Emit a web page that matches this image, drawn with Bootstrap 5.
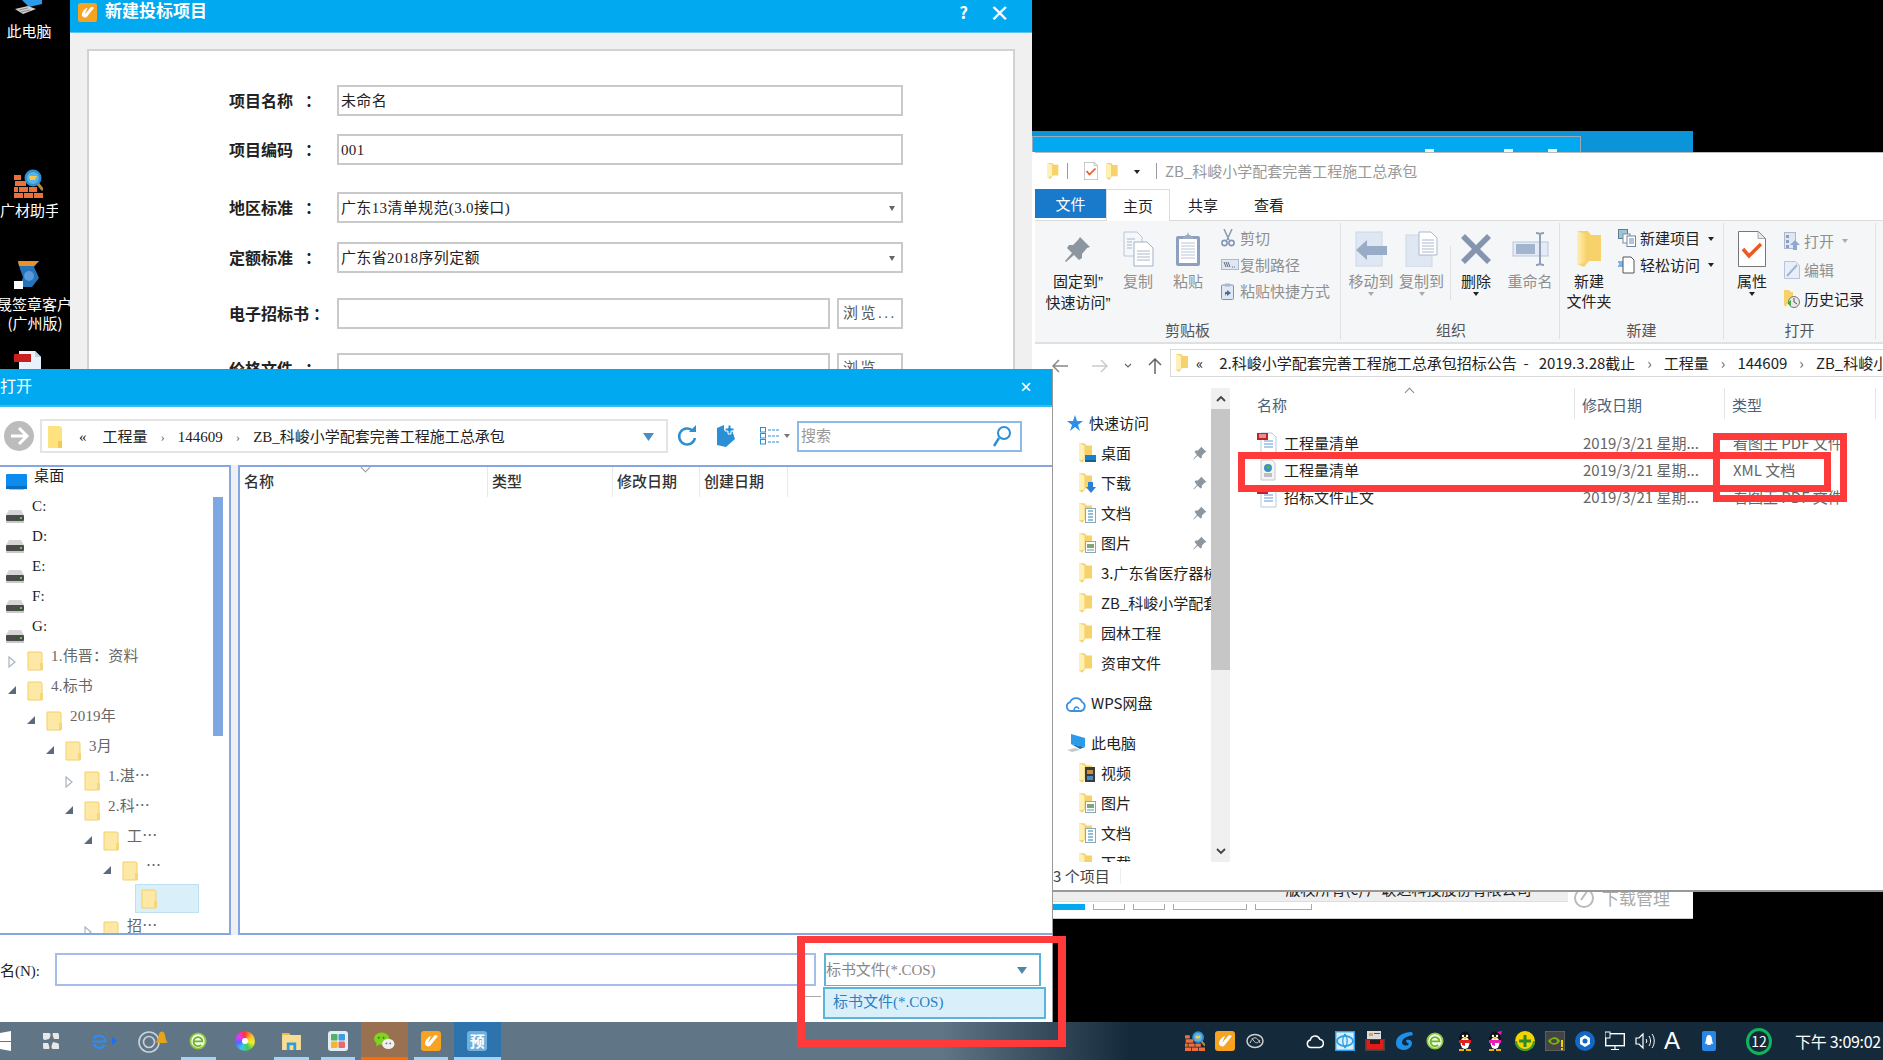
<!DOCTYPE html>
<html lang="zh-CN">
<head>
    <meta charset="UTF-8">
    <title>新建投标项目</title>
    <link href="https://cdn.jsdelivr.net/npm/bootstrap@5.3.3/dist/css/bootstrap.min.css" rel="stylesheet">
    <style>
        html, body { height: 100%; }
        body { background: #000; overflow: hidden; font-family: "Noto Sans CJK SC", "Liberation Sans", sans-serif; font-size: 15px; line-height: 20px; color: #222; }
        .sim { font-family: "Liberation Serif", "Noto Sans CJK SC", serif; }
        svg { display: block; flex: none; }

        /* desktop */
        .dsk { position: absolute; left: 0; width: 70px; color: #fff; text-align: center; white-space: nowrap; overflow: hidden; }
        .dsk svg { margin: 0 auto 2px 14px; }
        .dsk-a { top: 0; height: 40px; width: 58px; }
        .dsk-b { top: 169px; height: 54px; width: 58px; }
        .dsk-c { top: 261px; height: 74px; }
        .dsk-d { top: 351px; height: 18px; }
        .dsk-a svg { margin-bottom: 6px; }
        .dsk-b svg { margin-bottom: 2px; }
        .dsk-c svg { margin-bottom: 5px; }
        .dsk-c p { margin: 0 0 -1px -3px; width: 74px; }

        /* bid dialog */
        .bid { position: absolute; left: 70px; top: 0; width: 962px; height: 369px; background: #f0f0f0; z-index: 2; }
        .bid-title { height: 33px; background: #00a9f0; color: #fff; font-weight: 700; font-size: 17px; padding: 0 22px 8px 8px; border-bottom: 1px solid #5cc4ef; }
        .bid-q { margin-right: 21px; }
        .bid-close { font-size: 21px; }
        .bid-panel { margin: 16px 17px 0 17px; height: 330px; background: #fff; border: 2px solid #d2d2d2; padding: 34px 0 0 140px; overflow: hidden; }
        .frm-row { height: 31px; }
        .g18 { margin-bottom: 18px; } .g27 { margin-bottom: 27px; } .g19 { margin-bottom: 19px; } .g25 { margin-bottom: 25px; } .g24 { margin-bottom: 24px; }
        .frm-lab { width: 108px; font-weight: 700; font-size: 16px; color: #222; white-space: pre; padding-top: 3px; }
        .fld { width: 566px; height: 31px; border: 2px solid #c9c9c9; border-radius: 0; padding: 1px 2px 0; font-size: 15px; line-height: 27px; color: #222; letter-spacing: .35px; }
        .fld-s { width: 493px; margin-right: 7px; }
        .brw { width: 66px; height: 31px; border: 2px solid #c9c9c9; border-radius: 0; padding: 0; background: #fff; font-size: 15px; color: #555; letter-spacing: 2.500px; }
        .cart { width: 0; height: 0; border-left: 3px solid transparent; border-right: 3px solid transparent; border-top: 5px solid #666; margin-right: 4px; }

        /* window behind explorer */
        .back { position: absolute; left: 1032px; top: 131px; width: 661px; height: 788px; background: #fff; border-bottom: 1px solid #ccc; z-index: 1; }
        .back-top { height: 21px; background: #0b95d8; padding-top: 5px; }
        .back-top div { width: 549px; height: 16px; background: #00a9f0; border: 1px solid #9ab; border-bottom: 0; padding-left: 392px; }
        .back-top i { width: 9px; height: 3px; background: #e8f6fd; }
        .bt-b { margin-left: 70px; } .bt-c { margin-left: 35px; }
        .back-foot { height: 38px; }
        .back-strip { height: 22px; background: #eee; margin-left: 21px; margin-right: 125px; padding-left: 196px; text-align: center; line-height: 18px; color: #222; border-bottom: 1px solid #ddd; white-space: nowrap; }
        .back-tabs { padding: 2px 0 0 21px; }
        .back-tabs span { height: 6px; border: 1px solid #aaa; border-top: 0; background: #fff; }
        .back-tabs .on { background: #00a9f0; border: 0; width: 32px; }
        .wa { width: 32px; } .wb { width: 74px; } .wc { width: 57px; }
        .dl-mgr { position: absolute; left: 542px; bottom: 8px; color: #aaa; font-size: 17px; line-height: 24px; white-space: nowrap; }

        /* explorer */
        .expl { position: absolute; left: 1035px; top: 152px; width: 848px; height: 740px; background: #fff; border-top: 1px solid #bbb; border-bottom: 2px solid #999; z-index: 2; }
        .ex-title { height: 36px; padding-left: 12px; color: #999; }
        .ex-bar { width: 1px; height: 16px; background: #999; }
        .ex-tabs { height: 32px; border-bottom: 1px solid #dadbdc; }
        .ex-tab { height: 32px; text-align: center; line-height: 32px; }
        .tab-file { width: 71px; height: 29px; line-height: 29px; background: #1979ca; color: #fff; }
        .tab-home { width: 64px; background: #fff; border: 1px solid #dadbdc; border-bottom: 0; height: 32px; margin-bottom: -1px; position: relative; }
        .tab-other { width: 66px; }
        .ribbon { height: 123px; background: #f5f6f7; border-bottom: 2px solid #dfe0e1; }
        .rb-grp { border-right: 1px solid #dfe0e1; margin: 2px 0 3px; }
        .grp-1 { width: 306px; } .grp-2 { width: 219px; padding-left: 2px; } .grp-3 { width: 164px; } .grp-4 { width: 152px; }
        .rb-body { height: 96px; padding-top: 5px; }
        .rb-lab { text-align: center; color: #555; line-height: 22px; }
        .rb-big { text-align: center; color: #222; line-height: 20px; position: relative; white-space: nowrap; }
        .rb-ic { height: 42px; display: flex; align-items: center; justify-content: center; margin-bottom: 1px; }
        .rb-off { color: #8f8f8f; }
        .qt { font-family: "Liberation Sans", sans-serif; }
        .drop { width: 0; height: 0; border-left: 3px solid transparent; border-right: 3px solid transparent; border-top: 4px solid #222; margin: 1px auto 0; }
        .drop-g { border-top-color: #aaa; }
        .w86 { width: 86px; } .w34 { width: 34px; } .w66 { width: 66px; } .w56 { width: 56px; } .w45 { width: 45px; } .w52 { width: 52px; } .w58 { width: 58px; }
        .vsep { border-left: 1px solid #dfe0e1; height: 54px; margin-top: 18px; margin-left: 6px; margin-right: -1px; }
        .rb-small { margin-top: -3px; }
        .rb-line { height: 26.500px; white-space: nowrap; }
        .rb-open { margin-top: -2px; }
        .rb-open .rb-line { height: 29px; }
        .lab-off { color: #8f8f8f; }
        .ic-19 { width: 19px; } .ic-22 { width: 22px; }
        .ex-addr { height: 44px; padding-left: 17px; }
        .addr-box { width: 713px; height: 28px; margin-left: 8px; border: 1px solid #d9d9d9; border-right: 0; padding-left: 5px; white-space: pre; overflow: hidden; color: #222; margin-top: -7px; }
        .chev { color: #666; padding: 0 12px; }
        .ex-body { height: 474px; }
        .side { width: 176px; overflow: hidden; padding-top: 20px; }
        .side-row { height: 30px; width: 176px; white-space: nowrap; overflow: hidden; }
        .side-par { padding-left: 31px; gap: 5px; }
        .side-kid { padding-left: 44px; gap: 5px; }
        .side-gap { margin-top: 10px; }
        .side-pin { margin-left: auto; margin-right: 4px; }
        .sb { width: 19px; background: #f0f0f0; color: #444; }
        .sb-thumb { height: 261px; background: #c6c6c6; margin-top: 0; }
        .sb-btn { height: 21px; display: flex; align-items: center; justify-content: center; }
        .sb-sp { flex: 1; }
        .flist { flex: 1; padding-left: 3px; position: relative; }
        .fl-head { height: 31px; color: #4c607a; }
        .fl-head div { height: 31px; line-height: 33px; border-right: 1px solid #e5e5e5; padding-left: 7px; }
        .col-n { width: 342px; padding-left: 24px !important; }
        .col-d { width: 150px; }
        .col-t { width: 151px; }
        .sort-up { position: absolute; left: 176px; top: 1px; width: 7px; height: 7px; border-left: 1px solid #888; border-top: 1px solid #888; transform: rotate(45deg); }
        .fl-rows { padding-top: 10px; }
        .fl-row { height: 27px; line-height: 27px; color: #666; white-space: nowrap; }
        .fl-name { width: 342px; padding-left: 24px; gap: 7px; color: #222; }
        .fl-row .col-d, .fl-row .col-t { padding-left: 8px; overflow: hidden; }
        .ex-stat { height: 28px; padding-left: 18px; line-height: 28px; color: #444; }
        .stat-sep { width: 1px; height: 16px; background: #eee; margin-left: 10px; }

        /* open dialog */
        .opn { position: absolute; left: 0; top: 369px; width: 1053px; height: 653px; background: #fff; border-right: 1px solid #999; z-index: 3; }
        .opn-title { height: 38px; background: #00a9f0; color: #fff; font-size: 16px; padding-right: 20px; border-bottom: 2px solid #38b9ef; }
        .opn-close { font-size: 21px; font-weight: 700; }
        .opn-tool { height: 58px; padding-left: 4px; }
        .opn-addr { width: 628px; height: 34px; margin-left: 6px; border: 2px solid #e4e4e4; padding: 1px 12px 0 5px; color: #222; white-space: nowrap; }
        .opn-addr .chev { padding: 0 13px; font-size: 13px; }
        .opn-srch { width: 225px; height: 31px; border: 2px solid #8dbbe9; border-radius: 0; padding: 0 8px 0 2px; color: #999; }
        .t-ref { margin-left: 9px; } .t-fld { margin-left: 18px; } .t-lst { margin-left: 25px; }
        .t-srch { margin-left: 7px; }
        .opn-mid { height: 470px; background: #eef0f2; gap: 7px; }
        .tree { width: 231px; border: 2px solid #85a6e2; border-left: 0; background: #fff; overflow: hidden; position: relative; }
        .t-row { height: 30px; line-height: 24px; color: #666; white-space: nowrap; letter-spacing: .2px; }
        .t-top { color: #222; padding-left: 6px; }
        .t-first { height: 27px; line-height: 18px; }
        .t-top svg { margin-top: 16px; margin-right: 8px; }
        .t-first.t-top svg { margin-top: 7px; margin-right: 7px; }
        .t-arr { width: 19px; padding-top: 12px; }
        .t-row .t-f { margin-top: 7px; margin-right: 7px; }
        .l0 { padding-left: 8px; } .l1 { padding-left: 27px; } .l2 { padding-left: 46px; } .l3 { padding-left: 65px; } .l4 { padding-left: 84px; } .l5 { padding-left: 103px; }
        .t-sel { margin-left: 135px; width: 64px; height: 29px; padding: 4px 0 0 5px; background: #d9f0fb; border: 1px solid #bfe0f0; margin-bottom: 1px; }
        .t-scr { position: absolute; left: 213px; top: 30px; width: 10px; height: 239px; background: #7fa8e2; }
        .lst { flex: 1; border: 2px solid #85a6e2; border-right: 0; background: #fff; position: relative; }
        .lst-head { height: 30px; font-weight: 500; color: #333; }
        .lst-head div { height: 30px; line-height: 30px; border-right: 1px solid #e9e9e9; padding-left: 4px; }
        .lh-a { width: 248px; } .lh-b { width: 125px; } .lh-c { width: 87px; } .lh-d { width: 88px; }
        .sort-dn { position: absolute; left: 122px; top: -3px; width: 7px; height: 7px; border-right: 1px solid #999; border-bottom: 1px solid #999; transform: rotate(45deg); }
        .opn-bot { height: 87px; padding-top: 18px; }
        .nm-lab { width: 55px; }
        .nm-inp { width: 761px; height: 33px; border: 2px solid #a7bde9; border-radius: 0; }
        .cb-dash { position: absolute; left: 803px; top: 627px; width: 18px; height: 1px; background: #aaa; }
        .cb { width: 217px; height: 33px; margin-left: 8px; border: 2px solid #5ab4dc; border-bottom-width: 1px; padding: 0 12px 0 0; color: #888; letter-spacing: -.1px; }
        .cb-car { width: 0; height: 0; border-left: 5px solid transparent; border-right: 5px solid transparent; border-top: 7px solid #4f87a8; }
        .cb-list { position: absolute; left: 823px; top: 618px; width: 223px; height: 32px; background: #d9f0fb; border: 2px solid #5ab4dc; padding: 0 0 0 8px; line-height: 27px; color: #2a7fbf; z-index: 1; }

        /* taskbar */
        .tbar { position: absolute; left: 0; right: 0; bottom: 0; height: 38px; background: linear-gradient(90deg, #607585 0, #607585 50%, #14293a 60%); z-index: 4; }
        .tb-c { width: 46.500px; height: 38px; display: flex; align-items: center; justify-content: center; position: relative; }
        .tb-win { width: 28px; justify-content: flex-start; margin-left: -9px; margin-right: 9px; }
        .tb-s { width: 46px; } .tb-ie { width: 54px; gap: 3px; padding-left: 4px; } .tb-sw { width: 47px; }
        .ul::after { content: ""; position: absolute; left: 6px; right: 6px; bottom: 0; height: 3px; background: #a3d3f5; }
        .ul-wx { background: #9a7150; }
        .ul-wx::after { left: 0; right: 0; background: #ff6a00; }
        .ul-yu { background: #2d74ae; }
        .ul-yu::after { left: 0; right: 0; }
        .yu-ic { width: 20px; height: 20px; border-radius: 3px; background: #6fb0dc; color: #fff; font-size: 15px; line-height: 20px; text-align: center; font-weight: 700; }
        .swirl { width: 20px; height: 20px; border-radius: 50%; background: conic-gradient(#f33, #fb2, #ee3, #4c4, #3ce, #56f, #e3e, #f33); position: relative; }
        .swirl::after { content: ""; position: absolute; left: 7px; top: 7px; width: 6px; height: 6px; border-radius: 50%; background: #fff; }
        .tray { margin-left: auto; padding-right: 2px; }
        .tr-c { width: 30px; height: 38px; display: flex; align-items: center; justify-content: center; }
        .tr-gap { width: 30px; }
        .tr-a { width: 24px; color: #fff; font-family: "Liberation Sans", sans-serif; font-size: 24px; text-align: center; margin-right: 10px; }
        .tr-n { width: 26px; height: 27px; border: 3px solid #10b45c; border-radius: 50%; color: #fff; font-size: 14px; line-height: 21px; text-align: center; margin: 0 23px 0 22px; }
        .clock { color: #fff; font-size: 16px; white-space: nowrap; width: 86px; letter-spacing: -.3px; }

        /* red marks */
        .mk { position: absolute; border: 7px solid #ff3a3a; z-index: 5; }
        .mk-a { left: 1238px; top: 452px; width: 593px; height: 40px; }
        .mk-b { left: 1713px; top: 433px; width: 134px; height: 69px; }
        .mk-c { left: 797px; top: 936px; width: 269px; height: 111px; border-width: 7px 8px; }
    </style>
</head>
<body>

<svg width="0" height="0" class="position-absolute">
    <defs>
        <linearGradient id="yl" x1="0" x2="1" y1="0" y2="0"><stop offset="0" stop-color="#fff0b5"/><stop offset="1" stop-color="#f7cf62"/></linearGradient>
        <symbol id="fd" viewBox="0 0 17 20"><path d="M1 1h13l1 1v17H1z" fill="#fde9a5" stroke="#f4cf68"/><path d="M13 12h3v7h-3z" fill="#f7d677"/></symbol>
        <symbol id="fx" viewBox="0 0 12 18"><path d="M0 0h5l2 2h5v12H6l-3 4-3-2z" fill="#f7d16a"/><path d="M0 0l5 2v13l-5 1z" fill="#fff0b5"/></symbol>
        <symbol id="drv" viewBox="0 0 18 13"><path d="M3 0h12l3 5H0z" fill="#d6d6d6"/><rect y="5" width="18" height="6" rx="1" fill="#4b4b4b"/><rect x="14" y="7" width="2" height="2" fill="#4cd14c"/><rect y="11" width="18" height="2" fill="#c9c9c9"/></symbol>
        <symbol id="mon" viewBox="0 0 21 16"><rect width="21" height="13" rx="1" fill="#0d8cf0"/><rect y="12" width="21" height="3" fill="#0a6fc2"/><rect x="3" y="15" width="15" height="1" fill="#9cc"/></symbol>
        <symbol id="tro" viewBox="0 0 8 12"><path d="M1 1l6 5-6 5z" fill="#fff" stroke="#a9b4bd" stroke-width="1.2"/></symbol>
        <symbol id="trf" viewBox="0 0 8 8"><path d="M0 8L8 0v8z" fill="#5b6b7d"/></symbol>
        <symbol id="pin" viewBox="0 0 26 26"><path d="M15 1l10 10-3 1-5 6v4l-3 2-5-5-8 7-1-1 7-8-5-5 2-3h4l5-5z" fill="#8b969f"/></symbol>
        <symbol id="doc" viewBox="0 0 31 36"><path d="M1 1h13l5 5v19H1z" fill="#f4f7fb" stroke="#b9c6d8"/><path d="M11 11h13l6 6v18H11z" fill="#fff" stroke="#9fb0c8"/><path d="M14 20h13M14 23h13M14 26h13M14 29h13M4 8h8M4 11h5M4 14h5M4 17h5" stroke="#a9b8cc"/></symbol>
        <symbol id="clip" viewBox="0 0 26 36"><rect x="1" y="5" width="24" height="30" rx="2" fill="#8ea0bd"/><rect x="4" y="8" width="18" height="24" fill="#fff"/><path d="M6 12h14M6 15h14M6 18h14M6 21h14M6 24h14M6 27h14" stroke="#b9c6d8"/><path d="M8 6l3-2h1l1-3 1 3h1l3 2v2H8z" fill="#9cabc3"/></symbol>
        <symbol id="sci" viewBox="0 0 14 18"><path d="M3 0l5 11M11 0L6 11" stroke="#8f9db3" stroke-width="1.6" fill="none"/><circle cx="3.5" cy="14" r="2.6" fill="none" stroke="#8497b8" stroke-width="1.6"/><circle cx="10.5" cy="14" r="2.6" fill="none" stroke="#8497b8" stroke-width="1.6"/></symbol>
        <symbol id="cpp" viewBox="0 0 18 11"><rect x=".5" y=".5" width="17" height="10" fill="#dfe7f3" stroke="#a9b9d0"/><path d="M3 3l2 5M5 3l2 5M7 3l2 5M11 8h1M13 8h1" stroke="#667"/></symbol>
        <symbol id="shc" viewBox="0 0 13 17"><rect x=".5" y="2" width="12" height="14.5" rx="1" fill="#dfe7f3" stroke="#7f93b0"/><path d="M4 .5h5v3H4z" fill="#aab8cf"/><path d="M4 13V9h2V7l4 3-4 3v-2H5z" fill="#4c6c9a"/></symbol>
        <symbol id="mov" viewBox="0 0 33 36"><rect x="1" y="1" width="26" height="34" fill="#dfe7f3" stroke="#ccd7e8"/><path d="M12 28L1 18l11-10v6h20v9H12z" fill="#98acc8" transform="translate(0 1)"/></symbol>
        <symbol id="cpt" viewBox="0 0 33 36"><rect x="1" y="4" width="26" height="32" fill="#dfe7f3" stroke="#ccd7e8"/><path d="M14 1h12l6 6v17H14z" fill="#fff" stroke="#a9b9d0"/><path d="M17 9h12M17 12h12M17 15h12M17 18h12M17 21h12" stroke="#a9b8cc"/></symbol>
        <symbol id="del" viewBox="0 0 32 32"><path d="M5 1l11 11L27 1l4 4-11 11 11 11-4 4-11-11L5 31l-4-4 11-11L1 5z" fill="#8595b0"/></symbol>
        <symbol id="ren" viewBox="0 0 37 34"><rect x="1" y="10" width="35" height="14" fill="#e4ebf6" stroke="#b6c5dc"/><rect x="4" y="12" width="19" height="10" fill="#a3b4cf"/><path d="M24 1c3 0 4 1 4 2v28c0 1-1 2-4 2M32 1c-3 0-4 1-4 2v28c0 1 1 2 4 2" fill="none" stroke="#8ea0bd" stroke-width="2"/></symbol>
        <symbol id="nwf" viewBox="0 0 24 36"><path d="M0 0h11l3 4h10v26H12l-5 6-7-3z" fill="#f7d16a"/><path d="M0 0l11 4v27L0 34z" fill="url(#yl)"/></symbol>
        <symbol id="nwi" viewBox="0 0 18 18"><rect x=".5" y=".5" width="9" height="9" fill="#9cc5d8" stroke="#5a7f95"/><rect x="5" y="5" width="7" height="9" fill="#fff" stroke="#889"/><rect x="9" y="7" width="8.5" height="10.5" fill="#fff" stroke="#6f86a8"/><path d="M11 10h5M11 12h5M11 14h5" stroke="#6f86a8"/></symbol>
        <symbol id="eas" viewBox="0 0 17 18"><path d="M5 1h8l3 3v13H5z" fill="#fff" stroke="#555"/><path d="M0 6h5M1 8h4M0 10h5" stroke="#1a6fc4" stroke-width="1.2"/></symbol>
        <symbol id="chk" viewBox="0 0 28 36"><path d="M.5.5h20l7 7v28H.5z" fill="#fff" stroke="#777"/><path d="M20 .5v7h7" fill="#e8e8e8" stroke="#aaa"/><path d="M5 18l6 7 12-12" fill="none" stroke="#ec5a24" stroke-width="3.5"/></symbol>
        <symbol id="opn" viewBox="0 0 16 18"><rect x=".5" y=".5" width="11" height="16" fill="#dfe7f3" stroke="#aab9cf"/><path d="M2 3h3v3H2zM2 8h3v3H2zM2 13h3v3H2z" fill="#8ea0bd"/><path d="M11 8l5 5h-3v5H9v-5H6z" fill="#8ea9cd"/></symbol>
        <symbol id="edi" viewBox="0 0 16 18"><path d="M.5.5h11l4 4v13H.5z" fill="#e9eff8" stroke="#b6c5dc"/><path d="M3 15L13 4" stroke="#a3b4cf" stroke-width="2"/></symbol>
        <symbol id="his" viewBox="0 0 16 18"><path d="M0 0h5l2 2h2v9H4l-2 6-2-2z" fill="#f7d16a"/><circle cx="10" cy="12" r="5.5" fill="#e8e8e8" stroke="#777"/><path d="M10 8v4l3 2" stroke="#555" fill="none"/><path d="M3 13l4-3v6z" fill="#3fae3f"/></symbol>
        <symbol id="spin" viewBox="0 0 14 14"><path d="M8 .5l5.500 5.500-1.600.4-3 3v2.200l-1.400 1-2.800-2.800-4 3.600-.4-.4 3.600-4L1.600 5.800l1-1.400h2.200l3-3z" fill="#8b96a0"/></symbol>
        <symbol id="star" viewBox="0 0 18 18"><path d="M9 1l2 6h6l-5 4 2 6-5-4-5 4 2-6-5-4h6z" fill="#2d8fe8"/></symbol>
        <symbol id="sdk" viewBox="0 0 17 20"><use href="#fx" width="13" height="20"/><rect x="6" y="12" width="11" height="7" fill="#1b7fd0"/><rect x="6" y="17" width="11" height="2" fill="#135e9c"/></symbol>
        <symbol id="sdl" viewBox="0 0 17 20"><use href="#fx" width="13" height="20"/><path d="M9 9h5v5h3l-5 6-5-6h2z" fill="#2b7fd6"/></symbol>
        <symbol id="sdc" viewBox="0 0 17 20"><use href="#fx" width="13" height="20"/><rect x="6.500" y="5.500" width="10" height="14" fill="#fff" stroke="#8aa"/><path d="M9 8h5M9 11h5M9 14h5M9 17h5" stroke="#2a7fb8"/></symbol>
        <symbol id="spc" viewBox="0 0 17 20"><use href="#fx" width="13" height="20"/><rect x="6.500" y="8.500" width="10" height="11" fill="#fff" stroke="#8aa"/><rect x="8" y="11" width="7" height="4" fill="#7fa57f"/><path d="M8 17h7" stroke="#69a"/></symbol>
        <symbol id="svd" viewBox="0 0 17 20"><use href="#fx" width="13" height="20"/><rect x="6" y="4" width="10" height="15" fill="#3a3a3a"/><rect x="8" y="7" width="6" height="4" fill="#c8923c"/><rect x="8" y="13" width="6" height="4" fill="#4a8acb"/></symbol>
        <symbol id="pdf" viewBox="0 0 20 22"><path d="M4 1h11l4 4v16H4z" fill="#fff" stroke="#b5cbe0"/><path d="M7 9h9M7 12h9M7 15h9" stroke="#5f9ad2"/><rect x="0" y="1" width="11" height="7" fill="#c9201f"/><path d="M2 3h7M2 5h7" stroke="#fff"/></symbol>
        <symbol id="xml" viewBox="0 0 20 22"><path d="M4 1h11l3 3v17H4z" fill="#f4f4f4" stroke="#c8c8c8"/><circle cx="11" cy="9" r="4" fill="#3b8fd0"/><path d="M9 7h4v3h-3z" fill="#4fb04f"/><path d="M7 15h8M7 17h8" stroke="#888" stroke-width="1.200"/></symbol>
        <symbol id="cld" viewBox="0 0 20 20"><path d="M5 18a4.500 4.500 0 0 1-1-8.800 6.500 6.500 0 0 1 12-.2 4.800 4.800 0 0 1-1 9z" fill="#fff" stroke="#3d8fe0" stroke-width="1.800"/><path d="M8 18c0-5 4-5 5-2" fill="none" stroke="#3d8fe0" stroke-width="1.400"/></symbol>
        <symbol id="pc" viewBox="0 0 20 20"><path d="M5 1l14 4v9L5 11z" fill="#2c9ae8"/><path d="M5 11l14 3-5 2z" fill="#1770b8"/><path d="M1 17l8-2 5 2-8 2z" fill="#c9c9c9"/></symbol>
        <symbol id="fe" viewBox="0 0 20 20"><rect width="20" height="20" rx="3" fill="#f7a221"/><path d="M4 13c0-4 3-7 6-8l-3 7 7-8 3 1-8 10c-2 1-4 0-5-2z" fill="#fff"/></symbol>
        <symbol id="win" viewBox="0 0 20 20"><path d="M0 3l8-1v8H0zM9 2l11-2v10H9zM0 11h8v7l-8-1zM9 11h11v9L9 18z" fill="#fff"/></symbol>
        <symbol id="wps" viewBox="0 0 18 18"><path d="M1 1h6c2 0 2 3 0 6L3 8C1 8 1 6 1 5zM11 1h5c1 0 1 2 1 6h-5c-1-2-2-5-1-6zM1 11h5c1 2 2 5 1 6H2c-1 0-1-2-1-6zM11 10l4 1c2 0 2 2 2 3v3h-6c-2 0-2-3 0-7z" fill="#e8e8e8"/></symbol>
        <symbol id="ie" viewBox="0 0 22 22"><path d="M3 11h15a7.500 7.500 0 0 0-14-3M17 15a7.500 7.500 0 0 1-13-1" fill="none" stroke="#2f8cf0" stroke-width="2.600"/><path d="M17 2c3-1 4 1 3 3" fill="none" stroke="#2f8cf0"/></symbol>
        <symbol id="swl" viewBox="0 0 32 26"><circle cx="13" cy="14" r="10" fill="none" stroke="#c9d2d8" stroke-width="1.600"/><circle cx="13" cy="14" r="5.500" fill="none" stroke="#c9d2d8" stroke-width="1.600"/><path d="M19 14c4-1 3-5 4-8s5-4 6 1 1 6 3 7c-4 2-9 1-13 0z" fill="#e8a317"/></symbol>
        <symbol id="gre" viewBox="0 0 20 20"><circle cx="10" cy="10" r="8.500" fill="#f4fbe8" stroke="#8dc63f" stroke-width="2"/><path d="M5 10.500h10a5 5 0 1 0-1.500 3.800" fill="none" stroke="#6cb52a" stroke-width="2"/></symbol>
        <symbol id="xpf" viewBox="0 0 20 18"><path d="M0 0h7l2 2h11v16H0z" fill="#f9dd92"/><path d="M0 0h7l2 2H0z" fill="#e8b949"/><path d="M5 18v-8h10v8h-3v-5H8v5z" fill="#2d9fd8"/></symbol>
        <symbol id="tls" viewBox="0 0 20 20"><rect width="20" height="20" rx="3" fill="#e4edf2"/><rect x="3" y="3" width="6.500" height="6.500" rx="1" fill="#52b06a"/><rect x="10.500" y="3" width="6.500" height="6.500" rx="1" fill="#3d9de0"/><rect x="3" y="10.500" width="6.500" height="6.500" rx="1" fill="#f5b52e"/><rect x="10.500" y="10.500" width="6.500" height="6.500" rx="1" fill="#e86a6a"/></symbol>
        <symbol id="wx" viewBox="0 0 22 20"><ellipse cx="8" cy="7" rx="8" ry="6.500" fill="#7ed321"/><path d="M3 11l-1 4 4-2z" fill="#7ed321"/><ellipse cx="15" cy="12.500" rx="6.500" ry="5.500" fill="#f0f0f0"/><circle cx="13" cy="12" r="1" fill="#777"/><circle cx="17" cy="12" r="1" fill="#777"/><circle cx="5" cy="6" r="1" fill="#3a7a10"/><circle cx="10" cy="6" r="1" fill="#3a7a10"/></symbol>
        <symbol id="fwl" viewBox="0 0 29 29"><path d="M0 6h7v5H0zM1 12h11v5H1zM5 18h9v5H5zM0 18h4v5H0zM0 24h9v5H0zM10 24h9v5h-9zM20 24h9v5h-9zM15 18h8v5h-8z" fill="#ec6f3c"/><circle cx="19" cy="9" r="8.500" fill="#2f8fd0"/><circle cx="19" cy="9" r="6" fill="#57b4e8"/><path d="M15 7h8l-2 4h-5z" fill="#f7c84a"/><path d="M24 15l5 6" stroke="#b58a3a" stroke-width="3"/></symbol>
        <symbol id="acc" viewBox="0 0 18 16"><ellipse cx="9" cy="8" rx="8" ry="6.500" fill="none" stroke="#cfcfcf" stroke-width="1.500"/><path d="M4 10c3-7 7-7 10 0M6 5c3 6 6 6 8 2" fill="none" stroke="#cfcfcf"/></symbol>
        <symbol id="tcl" viewBox="0 0 18 16"><path d="M5 14.500a3.800 3.800 0 0 1-.7-7.500 5 5 0 0 1 9.500-.8 4.200 4.200 0 0 1 0 8.300z" fill="none" stroke="#fff" stroke-width="1.500"/></symbol>
        <symbol id="bsq" viewBox="0 0 20 20"><rect width="20" height="20" fill="#d8eefb"/><rect x=".7" y=".7" width="18.600" height="18.600" fill="none" stroke="#2ba0e8" stroke-width="1.400"/><ellipse cx="10" cy="10" rx="8" ry="5" fill="none" stroke="#2ba0e8" stroke-width="1.800"/><path d="M10 3c-3 4-3 10 0 14M10 3c3 4 3 10 0 14" fill="none" stroke="#2ba0e8" stroke-width="1.300"/></symbol>
        <symbol id="rdd" viewBox="0 0 20 20"><rect x="2" width="14" height="10" fill="#ddd"/><rect x="4" y="2" width="4" height="3" fill="#e8a040"/><rect x="9" y="2" width="6" height="1" fill="#555"/><rect x="0" y="8" width="20" height="12" fill="#444"/><rect x="1.500" y="9" width="17" height="9.500" fill="#e31b1b"/><rect x="5" y="9" width="10" height="4" fill="#222"/></symbol>
        <symbol id="gic" viewBox="0 0 20 20"><path d="M17 1C8 1 1 5 1 12c0 5 4 7 8 7s8-3 8-7c0-3-3-4-6-3l1 3c2-.5 2 1 1 2s-5 1-6-2c0-5 6-7 11-8z" fill="#1e90e8"/></symbol>
        <symbol id="qq" viewBox="0 0 18 20"><ellipse cx="9" cy="9" rx="6" ry="8.500" fill="#111"/><ellipse cx="9" cy="12" rx="4.500" ry="6" fill="#fff"/><circle cx="7" cy="5" r="1.200" fill="#fff"/><circle cx="11" cy="5" r="1.200" fill="#fff"/><path d="M7 7h4l-2 1.500z" fill="#f7b500"/><path d="M3 9h12v3H9v3l-3-1V12H3z" fill="#e02020"/><path d="M3 18h5v2H3zM10 18h5v2h-5z" fill="#f7b500"/></symbol>
        <symbol id="qp" viewBox="0 0 18 20"><ellipse cx="9" cy="9" rx="6" ry="8.500" fill="#111"/><ellipse cx="9" cy="12" rx="4.500" ry="6" fill="#fff"/><circle cx="7" cy="5" r="1.200" fill="#fff"/><circle cx="11" cy="5" r="1.200" fill="#fff"/><path d="M7 7h4l-2 1.500z" fill="#f7b500"/><path d="M3 9h12v3H9v3l-3-1V12H3z" fill="#e91eb4"/><path d="M11 1l5-1-1 4z" fill="#e91eb4"/><path d="M3 18h5v2H3zM10 18h5v2h-5z" fill="#f7b500"/></symbol>
        <symbol id="s60" viewBox="0 0 20 20"><circle cx="10" cy="10" r="10" fill="#f3d400"/><path d="M0 10a10 10 0 0 0 20 0h-2a8 8 0 0 1-16 0z" fill="#2f9e2f"/><path d="M8.500 4h3v4.500H16v3h-4.500V16h-3v-4.500H4v-3h4.500z" fill="#2a8a2a"/></symbol>
        <symbol id="nvd" viewBox="0 0 20 20"><rect width="20" height="20" rx="2" fill="#444" stroke="#777"/><path d="M3 10c5-6 10-4 12 0-3 5-8 5-12 0z" fill="#76b900"/><ellipse cx="9" cy="10" rx="3" ry="2" fill="#444"/><rect x="16" y="9" width="2" height="7" fill="#f3d400"/><rect x="16" y="17" width="2" height="2" fill="#f3d400"/></symbol>
        <symbol id="gar" viewBox="0 0 20 20"><circle cx="10" cy="10" r="10" fill="#1368c4"/><path d="M10 4l5 3v6l-5 3-5-3V7z" fill="#fff"/><circle cx="10" cy="10" r="2.500" fill="#1368c4"/></symbol>
        <symbol id="net" viewBox="0 0 20 20"><rect x=".7" y="2.700" width="18.600" height="12" fill="none" stroke="#fff" stroke-width="1.400"/><rect x="0" y="1" width="5" height="6" fill="#14293a" stroke="#fff"/><path d="M10 15v3M6 18.500h8" stroke="#fff" stroke-width="1.200"/></symbol>
        <symbol id="spk" viewBox="0 0 20 20"><path d="M1 7h3l4-4v14l-4-4H1z" fill="none" stroke="#fff" stroke-width="1.200"/><path d="M11 8c1 1 1 3 0 4M14 5c2 3 2 7 0 10M17 3c3 4 3 10 0 14" fill="none" stroke="#fff"/></symbol>
        <symbol id="qnt" viewBox="0 0 14 20"><rect width="14" height="20" rx="2" fill="#2a86e6"/><path d="M7 4c-2 0-3 2-3 5l-1 4 1.500-.5c.5 1 1 1.500 2.500 1.500s2-.5 2.500-1.500L11 13l-1-4c0-3-1-5-3-5z" fill="#fff"/></symbol>
    </defs>
</svg>

<!-- desktop icons -->
<div class="dsk dsk-a"><svg width="28" height="15" viewBox="0 0 28 15"><path d="M8 0h20v4L15 7z" fill="#2c9ae8"/><path d="M1 9l13-3 8 3-13 5z" fill="#d0d0d0"/><path d="M5 10l9-2M7 12l9-2" stroke="#888"/></svg>此电脑</div>
<div class="dsk dsk-b"><svg width="29" height="29"><use href="#fwl"/></svg>广材助手</div>
<div class="dsk dsk-c"><svg width="25" height="28" viewBox="0 0 25 28"><path d="M4 0h21l-5 6 5 11-7 9H6l3-10L6 8z" fill="#2573b8"/><path d="M4 0h21l-5 5H5z" fill="#e8932a"/><circle cx="15" cy="15" r="5" fill="#5a9ad8"/><rect y="20" width="9" height="8" fill="#fff"/></svg><p>晟签章客户</p>(广州版)</div>
<div class="dsk dsk-d"><svg width="28" height="18" viewBox="0 0 28 18"><path d="M5 0h16l6 6v12H5z" fill="#e9f2fb"/><path d="M21 0v6h6z" fill="#bcd3e8"/><rect x="0" y="3" width="17" height="8" fill="#c9201f"/></svg></div>

<!-- window behind the explorer -->
<div class="back d-flex flex-column">
    <div class="back-top"><div class="d-flex align-items-end"><i></i><i class="bt-b"></i><i class="bt-c"></i></div></div>
    <div class="back-foot mt-auto">
        <div class="back-strip">版权所有(c) 广联达科技股份有限公司</div>
        <div class="back-tabs d-flex gap-2">
            <span class="on"></span><span class="wa"></span><span class="wa"></span><span class="wb"></span><span class="wc"></span>
        </div>
    </div>
    <div class="dl-mgr d-flex align-items-center gap-2">
        <svg width="20" height="24" viewBox="0 0 20 24"><circle cx="10" cy="12" r="9" fill="none" stroke="#bbb" stroke-width="2"/><path d="M7 14l7-10" stroke="#bbb" stroke-width="2"/></svg>
        下载管理
    </div>
</div>

<!-- bid dialog -->
<div class="bid">
    <div class="bid-title d-flex align-items-center">
        <svg width="19" height="19" class="me-2"><use href="#fe"/></svg>
        <span class="sim">新建投标项目</span>
        <span class="ms-auto bid-q">?</span><span class="bid-close">×</span>
    </div>
    <div class="bid-panel sim">
        <div class="frm-row g18 d-flex align-items-center"><span class="frm-lab">项目名称   ：</span><div class="form-control fld">未命名</div></div>
        <div class="frm-row g27 d-flex align-items-center"><span class="frm-lab">项目编码   ：</span><div class="form-control fld">001</div></div>
        <div class="frm-row g19 d-flex align-items-center"><span class="frm-lab">地区标准   ：</span><div class="form-control fld d-flex align-items-center justify-content-between"><span>广东13清单规范(3.0接口)</span><i class="cart"></i></div></div>
        <div class="frm-row g25 d-flex align-items-center"><span class="frm-lab">定额标准   ：</span><div class="form-control fld d-flex align-items-center justify-content-between"><span>广东省2018序列定额</span><i class="cart"></i></div></div>
        <div class="frm-row g24 d-flex align-items-center"><span class="frm-lab">电子招标书 ：</span><div class="form-control fld fld-s"></div><button class="btn brw">浏览...</button></div>
        <div class="frm-row d-flex align-items-center"><span class="frm-lab">价格文件   ：</span><div class="form-control fld fld-s"></div><button class="btn brw">浏览...</button></div>
    </div>
</div>

<!-- explorer -->
<div class="expl">
    <div class="ex-title d-flex align-items-center">
        <svg width="12" height="16"><use href="#fx"/></svg>
        <span class="ex-bar ms-2 me-3"></span>
        <svg width="14" height="18" viewBox="0 0 28 36"><use href="#chk"/></svg>
        <svg width="12" height="17" class="ms-2 me-3"><use href="#fx"/></svg>
        <i class="drop mx-0"></i>
        <span class="ex-bar ms-3 me-2"></span>
        <span>ZB_科峻小学配套完善工程施工总承包</span>
    </div>
    <div class="ex-tabs d-flex">
        <div class="ex-tab tab-file">文件</div>
        <div class="ex-tab tab-home">主页</div>
        <div class="ex-tab tab-other">共享</div>
        <div class="ex-tab tab-other">查看</div>
    </div>
    <div class="ribbon d-flex">
        <div class="rb-grp grp-1">
            <div class="rb-body d-flex">
                <div class="rb-big w86"><div class="rb-ic"><svg width="26" height="26"><use href="#pin"/></svg></div>固定到<span class="qt">”</span><br>快速访问<span class="qt">”</span></div>
                <div class="rb-big w34 rb-off"><div class="rb-ic"><svg width="31" height="36"><use href="#doc"/></svg></div>复制</div>
                <div class="rb-big w66 rb-off"><div class="rb-ic"><svg width="26" height="36"><use href="#clip"/></svg></div>粘贴</div>
                <div class="rb-small">
                    <div class="rb-line d-flex align-items-center lab-off"><span class="ic-19"><svg width="14" height="18"><use href="#sci"/></svg></span>剪切</div>
                    <div class="rb-line d-flex align-items-center lab-off"><span class="ic-19"><svg width="18" height="11"><use href="#cpp"/></svg></span>复制路径</div>
                    <div class="rb-line d-flex align-items-center lab-off"><span class="ic-19"><svg width="13" height="17"><use href="#shc"/></svg></span>粘贴快捷方式</div>
                </div>
            </div>
            <div class="rb-lab">剪贴板</div>
        </div>
        <div class="rb-grp grp-2">
            <div class="rb-body d-flex">
                <div class="rb-big w56 rb-off"><div class="rb-ic"><svg width="33" height="36"><use href="#mov"/></svg></div>移动到<i class="drop drop-g d-block"></i></div>
                <div class="rb-big w45 rb-off"><div class="rb-ic"><svg width="33" height="36"><use href="#cpt"/></svg></div>复制到<i class="drop drop-g d-block"></i></div>
                <div class="vsep"></div>
                <div class="rb-big w52"><div class="rb-ic"><svg width="32" height="32"><use href="#del"/></svg></div>删除<i class="drop d-block"></i></div>
                <div class="rb-big w56 rb-off"><div class="rb-ic"><svg width="37" height="34"><use href="#ren"/></svg></div>重命名</div>
            </div>
            <div class="rb-lab">组织</div>
        </div>
        <div class="rb-grp grp-3">
            <div class="rb-body d-flex">
                <div class="rb-big w58"><div class="rb-ic"><svg width="24" height="36"><use href="#nwf"/></svg></div>新建<br>文件夹</div>
                <div class="rb-small">
                    <div class="rb-line d-flex align-items-center"><span class="ic-22"><svg width="18" height="18"><use href="#nwi"/></svg></span>新建项目<i class="drop ms-2"></i></div>
                    <div class="rb-line d-flex align-items-center"><span class="ic-22"><svg width="17" height="18"><use href="#eas"/></svg></span>轻松访问<i class="drop ms-2"></i></div>
                </div>
            </div>
            <div class="rb-lab">新建</div>
        </div>
        <div class="rb-grp grp-4">
            <div class="rb-body d-flex">
                <div class="rb-big w56"><div class="rb-ic"><svg width="28" height="36"><use href="#chk"/></svg></div>属性<i class="drop d-block"></i></div>
                <div class="rb-small rb-open ms-1">
                    <div class="rb-line d-flex align-items-center lab-off"><span class="me-1"><svg width="16" height="18"><use href="#opn"/></svg></span>打开<i class="drop drop-g ms-2"></i></div>
                    <div class="rb-line d-flex align-items-center lab-off"><span class="me-1"><svg width="16" height="18"><use href="#edi"/></svg></span>编辑</div>
                    <div class="rb-line d-flex align-items-center"><span class="me-1"><svg width="16" height="18"><use href="#his"/></svg></span>历史记录</div>
                </div>
            </div>
            <div class="rb-lab">打开</div>
        </div>
    </div>
    <div class="ex-addr d-flex align-items-center">
        <svg width="16" height="14" viewBox="0 0 16 14"><path d="M7 1L1 7l6 6M1 7h15" fill="none" stroke="#888" stroke-width="1.500"/></svg>
        <svg width="16" height="14" viewBox="0 0 16 14" class="ms-4"><path d="M9 1l6 6-6 6M15 7H0" fill="none" stroke="#ccc" stroke-width="1.500"/></svg>
        <svg width="8" height="6" viewBox="0 0 8 6" class="ms-3"><path d="M1 1l3 3 3-3" fill="none" stroke="#666" stroke-width="1.200"/></svg>
        <svg width="14" height="16" viewBox="0 0 14 16" class="ms-3"><path d="M1 7l6-6 6 6M7 1v15" fill="none" stroke="#666" stroke-width="1.500"/></svg>
        <div class="addr-box d-flex align-items-center">
            <svg width="12" height="18" class="me-2"><use href="#fx"/></svg>
            <span class="me-3">«</span>
            <span>2.科峻小学配套完善工程施工总承包招标公告  -   2019.3.28截止</span><span class="chev">›</span>
            <span>工程量</span><span class="chev">›</span>
            <span>144609</span><span class="chev">›</span>
            <span>ZB_科峻小</span>
        </div>
    </div>
    <div class="ex-body d-flex">
        <div class="side">
            <div class="side-row side-par d-flex align-items-center"><svg width="18" height="18"><use href="#star"/></svg>快速访问</div>
            <div class="side-row side-kid d-flex align-items-center"><svg width="17" height="20"><use href="#sdk"/></svg>桌面<svg width="14" height="14" class="side-pin"><use href="#spin"/></svg></div>
            <div class="side-row side-kid d-flex align-items-center"><svg width="17" height="20"><use href="#sdl"/></svg>下载<svg width="14" height="14" class="side-pin"><use href="#spin"/></svg></div>
            <div class="side-row side-kid d-flex align-items-center"><svg width="17" height="20"><use href="#sdc"/></svg>文档<svg width="14" height="14" class="side-pin"><use href="#spin"/></svg></div>
            <div class="side-row side-kid d-flex align-items-center"><svg width="17" height="20"><use href="#spc"/></svg>图片<svg width="14" height="14" class="side-pin"><use href="#spin"/></svg></div>
            <div class="side-row side-kid d-flex align-items-center"><svg width="17" height="20" viewBox="0 0 17 20"><use href="#fx" width="13" height="20"/></svg>3.广东省医疗器械</div>
            <div class="side-row side-kid d-flex align-items-center"><svg width="17" height="20" viewBox="0 0 17 20"><use href="#fx" width="13" height="20"/></svg>ZB_科峻小学配套</div>
            <div class="side-row side-kid d-flex align-items-center"><svg width="17" height="20" viewBox="0 0 17 20"><use href="#fx" width="13" height="20"/></svg>园林工程</div>
            <div class="side-row side-kid d-flex align-items-center"><svg width="17" height="20" viewBox="0 0 17 20"><use href="#fx" width="13" height="20"/></svg>资审文件</div>
            <div class="side-row side-par side-gap d-flex align-items-center"><svg width="20" height="20"><use href="#cld"/></svg>WPS网盘</div>
            <div class="side-row side-par side-gap d-flex align-items-center"><svg width="20" height="20"><use href="#pc"/></svg>此电脑</div>
            <div class="side-row side-kid d-flex align-items-center"><svg width="17" height="20"><use href="#svd"/></svg>视频</div>
            <div class="side-row side-kid d-flex align-items-center"><svg width="17" height="20"><use href="#spc"/></svg>图片</div>
            <div class="side-row side-kid d-flex align-items-center"><svg width="17" height="20"><use href="#sdc"/></svg>文档</div>
            <div class="side-row side-kid d-flex align-items-center"><svg width="17" height="20"><use href="#sdl"/></svg>下载</div>
        </div>
        <div class="sb d-flex flex-column">
            <div class="sb-btn"><svg width="10" height="7" viewBox="0 0 10 7"><path d="M1 6l4-4 4 4" fill="none" stroke="#444" stroke-width="1.800"/></svg></div>
            <div class="sb-thumb"></div>
            <div class="sb-sp"></div>
            <div class="sb-btn"><svg width="10" height="7" viewBox="0 0 10 7"><path d="M1 1l4 4 4-4" fill="none" stroke="#444" stroke-width="1.800"/></svg></div>
        </div>
        <div class="flist">
            <i class="sort-up"></i>
            <div class="fl-head d-flex"><div class="col-n">名称</div><div class="col-d">修改日期</div><div class="col-t">类型</div></div>
            <div class="fl-rows">
                <div class="fl-row d-flex"><div class="fl-name d-flex align-items-center"><svg width="20" height="22"><use href="#pdf"/></svg>工程量清单</div><div class="col-d">2019/3/21 星期...</div><div class="col-t">看图王 PDF 文件</div></div>
                <div class="fl-row d-flex"><div class="fl-name d-flex align-items-center"><svg width="20" height="22"><use href="#xml"/></svg>工程量清单</div><div class="col-d">2019/3/21 星期...</div><div class="col-t">XML 文档</div></div>
                <div class="fl-row d-flex"><div class="fl-name d-flex align-items-center"><svg width="20" height="22"><use href="#pdf"/></svg>招标文件正文</div><div class="col-d">2019/3/21 星期...</div><div class="col-t">看图王 PDF 文件</div></div>
            </div>
        </div>
    </div>
    <div class="ex-stat d-flex align-items-center">3 个项目<span class="stat-sep"></span></div>
</div>

<!-- open dialog -->
<div class="opn sim">
    <div class="opn-title d-flex align-items-center justify-content-between"><span>打开</span><span class="opn-close">×</span></div>
    <div class="opn-tool d-flex align-items-center">
        <svg width="30" height="30" viewBox="0 0 30 30"><circle cx="15" cy="15" r="15" fill="#bcbcbc"/><path d="M15 7l8 8-8 8M7 15h15" fill="none" stroke="#fff" stroke-width="3"/></svg>
        <div class="opn-addr d-flex align-items-center">
            <svg width="16" height="24" viewBox="0 0 16 24"><path d="M1 1h12l2 2v20H1z" fill="#fde27f"/><path d="M11 16h4v7h-4z" fill="#f4c94f"/></svg>
            <span class="ms-3">«</span>
            <span class="ms-3">工程量</span><span class="chev">›</span>
            <span>144609</span><span class="chev">›</span>
            <span>ZB_科峻小学配套完善工程施工总承包</span>
            <svg width="11" height="8" viewBox="0 0 11 8" class="ms-auto"><path d="M0 0h11L5.500 8z" fill="#4a8cc7"/></svg>
        </div>
        <svg width="20" height="24" viewBox="0 0 20 24" class="t-ref"><path d="M16 7a8 8 0 1 0 2 7" fill="none" stroke="#2b8fd6" stroke-width="2.500"/><path d="M12 8h7V1z" fill="#2b8fd6"/></svg>
        <svg width="20" height="24" viewBox="0 0 20 24" class="t-fld"><path d="M2 4l7-3v5h8l3 9-9 8-9-2z" fill="#2b8fd6"/><path d="M13 1h3v3h3v3h-3v3h-3V7h-3V4h3z" fill="#2b8fd6" stroke="#fff"/></svg>
        <svg width="20" height="18" viewBox="0 0 20 18" class="t-lst"><rect x=".5" y=".5" width="5" height="4.500" fill="none" stroke="#2b8fd6"/><rect x=".5" y="6.500" width="5" height="4.500" fill="none" stroke="#2b8fd6"/><rect x=".5" y="12.500" width="5" height="4.500" fill="none" stroke="#2b8fd6"/><path d="M8 3h11M8 9h11M8 15h11" stroke="#2b8fd6" stroke-dasharray="3 1"/></svg>
        <svg width="6" height="4" viewBox="0 0 6 4" class="ms-1"><path d="M0 0h6L3 4z" fill="#777"/></svg>
        <div class="opn-srch t-srch d-flex align-items-center justify-content-between">
            <span>搜索</span>
            <svg width="20" height="22" viewBox="0 0 20 22"><circle cx="12" cy="8" r="6" fill="none" stroke="#2b8fd6" stroke-width="2"/><path d="M7 13l-5 8" stroke="#2b8fd6" stroke-width="2.500"/></svg>
        </div>
    </div>
    <div class="opn-mid d-flex">
        <div class="tree">
            <div class="t-row t-top t-first d-flex"><svg width="21" height="16"><use href="#mon"/></svg>桌面</div>
            <div class="t-row t-top d-flex"><svg width="18" height="13"><use href="#drv"/></svg>C:</div>
            <div class="t-row t-top d-flex"><svg width="18" height="13"><use href="#drv"/></svg>D:</div>
            <div class="t-row t-top d-flex"><svg width="18" height="13"><use href="#drv"/></svg>E:</div>
            <div class="t-row t-top d-flex"><svg width="18" height="13"><use href="#drv"/></svg>F:</div>
            <div class="t-row t-top d-flex"><svg width="18" height="13"><use href="#drv"/></svg>G:</div>
            <div class="t-row l0 d-flex"><span class="t-arr"><svg width="8" height="12"><use href="#tro"/></svg></span><svg width="17" height="20" class="t-f"><use href="#fd"/></svg>1.伟晋：资料</div>
            <div class="t-row l0 d-flex"><span class="t-arr"><svg width="8" height="8"><use href="#trf"/></svg></span><svg width="17" height="20" class="t-f"><use href="#fd"/></svg>4.标书</div>
            <div class="t-row l1 d-flex"><span class="t-arr"><svg width="8" height="8"><use href="#trf"/></svg></span><svg width="17" height="20" class="t-f"><use href="#fd"/></svg>2019年</div>
            <div class="t-row l2 d-flex"><span class="t-arr"><svg width="8" height="8"><use href="#trf"/></svg></span><svg width="17" height="20" class="t-f"><use href="#fd"/></svg>3月</div>
            <div class="t-row l3 d-flex"><span class="t-arr"><svg width="8" height="12"><use href="#tro"/></svg></span><svg width="17" height="20" class="t-f"><use href="#fd"/></svg>1.湛⋯</div>
            <div class="t-row l3 d-flex"><span class="t-arr"><svg width="8" height="8"><use href="#trf"/></svg></span><svg width="17" height="20" class="t-f"><use href="#fd"/></svg>2.科⋯</div>
            <div class="t-row l4 d-flex"><span class="t-arr"><svg width="8" height="8"><use href="#trf"/></svg></span><svg width="17" height="20" class="t-f"><use href="#fd"/></svg>工⋯</div>
            <div class="t-row l5 d-flex"><span class="t-arr"><svg width="8" height="8"><use href="#trf"/></svg></span><svg width="17" height="20" class="t-f"><use href="#fd"/></svg>⋯</div>
            <div class="t-sel"><svg width="17" height="20"><use href="#fd"/></svg></div>
            <div class="t-row l4 d-flex"><span class="t-arr"><svg width="8" height="12"><use href="#tro"/></svg></span><svg width="17" height="20" class="t-f"><use href="#fd"/></svg>招⋯</div>
            <div class="t-scr"></div>
        </div>
        <div class="lst">
            <i class="sort-dn"></i>
            <div class="lst-head d-flex"><div class="lh-a">名称</div><div class="lh-b">类型</div><div class="lh-c">修改日期</div><div class="lh-d">创建日期</div></div>
        </div>
    </div>
    <div class="opn-bot d-flex">
        <div class="nm-lab pt-1 mt-1">名(N):</div>
        <input class="form-control nm-inp" type="text" aria-label="文件名">
        <div class="cb d-flex align-items-center justify-content-between"><span>标书文件(*.COS)</span><i class="cb-car"></i></div>
    </div>
    <div class="cb-dash"></div>
    <div class="cb-list">标书文件(*.COS)</div>
</div>

<!-- taskbar -->
<div class="tbar d-flex">
    <div class="tb-c tb-win"><svg width="20" height="20"><use href="#win"/></svg></div>
    <div class="tb-c tb-s"><svg width="18" height="18"><use href="#wps"/></svg></div>
    <div class="tb-c tb-ie"><svg width="19" height="19"><use href="#ie"/></svg><svg width="5" height="8" viewBox="0 0 5 8"><path d="M0 0l5 4-5 4z" fill="#1a70f0"/></svg></div>
    <div class="tb-c tb-sw"><svg width="32" height="26"><use href="#swl"/></svg></div>
    <div class="tb-c ul"><svg width="18" height="18"><use href="#gre"/></svg></div>
    <div class="tb-c"><span class="swirl"></span></div>
    <div class="tb-c ul"><svg width="19" height="17"><use href="#xpf"/></svg></div>
    <div class="tb-c ul"><svg width="20" height="20"><use href="#tls"/></svg></div>
    <div class="tb-c ul ul-wx"><svg width="21" height="19"><use href="#wx"/></svg></div>
    <div class="tb-c ul"><svg width="20" height="20"><use href="#fe"/></svg></div>
    <div class="tb-c ul ul-yu"><span class="yu-ic">预</span></div>
    <div class="tray d-flex align-items-center">
        <div class="tr-c"><svg width="20" height="20"><use href="#fwl"/></svg></div>
        <div class="tr-c"><svg width="20" height="20"><use href="#fe"/></svg></div>
        <div class="tr-c"><svg width="18" height="16"><use href="#acc"/></svg></div>
        <div class="tr-gap"></div>
        <div class="tr-c"><svg width="18" height="16"><use href="#tcl"/></svg></div>
        <div class="tr-c"><svg width="20" height="20"><use href="#bsq"/></svg></div>
        <div class="tr-c"><svg width="20" height="20"><use href="#rdd"/></svg></div>
        <div class="tr-c"><svg width="20" height="20"><use href="#gic"/></svg></div>
        <div class="tr-c"><svg width="18" height="18"><use href="#gre"/></svg></div>
        <div class="tr-c"><svg width="18" height="20"><use href="#qq"/></svg></div>
        <div class="tr-c"><svg width="18" height="20"><use href="#qp"/></svg></div>
        <div class="tr-c"><svg width="20" height="20"><use href="#s60"/></svg></div>
        <div class="tr-c"><svg width="20" height="20"><use href="#nvd"/></svg></div>
        <div class="tr-c"><svg width="20" height="20"><use href="#gar"/></svg></div>
        <div class="tr-c"><svg width="20" height="20"><use href="#net"/></svg></div>
        <div class="tr-c"><svg width="20" height="20"><use href="#spk"/></svg></div>
        <div class="tr-a">A</div>
        <div class="tr-c"><svg width="14" height="20"><use href="#qnt"/></svg></div>
        <div class="tr-n">12</div>
        <div class="clock">下午 3:09:02</div>
    </div>
</div>

<!-- red marks drawn over the screenshot -->
<div class="mk mk-a"></div>
<div class="mk mk-b"></div>
<div class="mk mk-c"></div>

<script src="https://cdn.jsdelivr.net/npm/bootstrap@5.3.3/dist/js/bootstrap.bundle.min.js"></script>
</body>
</html>
